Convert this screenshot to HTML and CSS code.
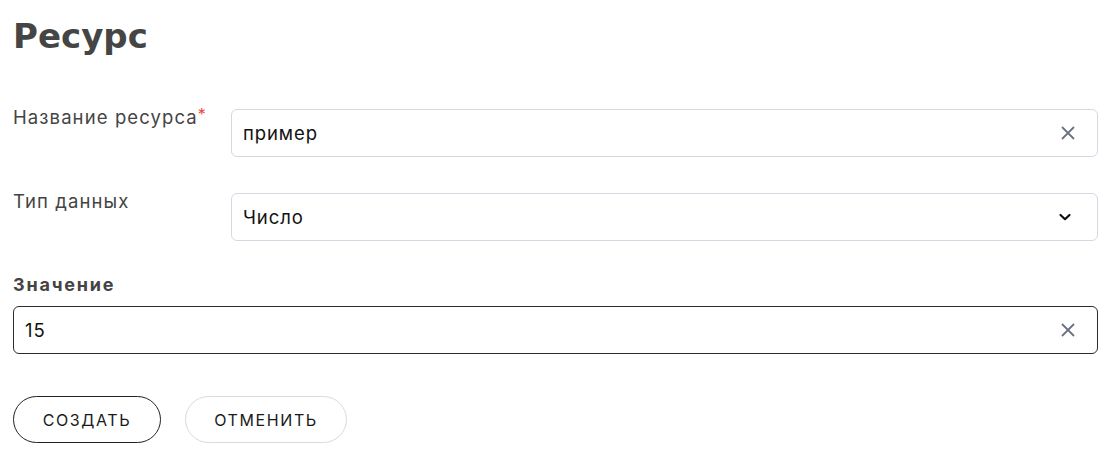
FILE: index.html
```html
<!DOCTYPE html>
<html lang="ru">
<head>
<meta charset="utf-8">
<link rel="stylesheet" href="styles.css">
</head>
<body>
<div class="page">
  <h1 class="title">Ресурс</h1>
  <div class="row row-first">
    <label class="row-label">Название ресурса<span class="req">*</span></label>
    <div class="field">
      <span class="field-text">пример</span>
      <svg class="icon-x" width="16" height="16" viewBox="0 0 16 16"><path d="M2 2L14 14M14 2L2 14" stroke="#6b7280" stroke-width="1.8" fill="none"/></svg>
    </div>
  </div>
  <div class="row">
    <label class="row-label">Тип данных</label>
    <div class="field">
      <span class="field-text">Число</span>
      <svg class="icon-chev" width="14" height="10" viewBox="0 0 14 10"><path d="M2.5 3L7 7.2L11.5 3" stroke="#111" stroke-width="2.2" fill="none" stroke-linecap="round" stroke-linejoin="round"/></svg>
    </div>
  </div>
  <div class="block">
    <div class="block-label">Значение</div>
    <div class="field field-dark">
      <span class="field-text">15</span>
      <svg class="icon-x" width="16" height="16" viewBox="0 0 16 16"><path d="M2 2L14 14M14 2L2 14" stroke="#6b7280" stroke-width="1.8" fill="none"/></svg>
    </div>
  </div>
  <div class="actions">
    <button class="btn btn-primary">СОЗДАТЬ</button>
    <button class="btn btn-secondary">ОТМЕНИТЬ</button>
  </div>
</div>
</body>
</html>
```
FILE: styles.css
```css
* { box-sizing: border-box; }
body {
  margin: 0;
  background: #fff;
  font-family: "Inter", "Noto Sans", sans-serif;
  color: #222;
}
.page {
  padding: 14px 8px 0 13px;
}
.title {
  margin: 0;
  font-family: "DejaVu Sans", "Noto Sans", sans-serif;
  font-weight: 700;
  font-size: 34px;
  line-height: 44px;
  color: #454545;
  letter-spacing: 0;
}
.row {
  display: flex;
  align-items: flex-start;
  margin-top: 36px;
}
.row-first {
  margin-top: 51px;
}
.row-label {
  width: 218px;
  flex: none;
  font-size: 18.5px;
  line-height: 16px;
  color: #444;
  letter-spacing: 1.1px;
}
.req {
  color: #ef4444;
  font-size: 16px;
  position: relative;
  top: -4px;
  letter-spacing: 0;
}
.field {
  flex: 1;
  height: 48px;
  border: 1px solid #d4d8e2;
  border-radius: 6px;
  display: flex;
  align-items: center;
  justify-content: space-between;
  padding: 0 21px 0 11px;
  background: #fff;
}
.field-text {
  font-size: 18.5px;
  color: #111;
  letter-spacing: 0.9px;
}
.icon-chev { margin-right: 4px; }
.block {
  margin-top: 34px;
}
.block-label {
  font-size: 18px;
  font-weight: 700;
  color: #444;
  line-height: 20px;
  margin-bottom: 11px;
  letter-spacing: 1.8px;
}
.field-dark {
  border-color: #2b2b2b;
}
.actions {
  display: flex;
  gap: 24px;
  margin-top: 42px;
}
.btn {
  height: 47px;
  border-radius: 24px;
  background: #fff;
  font-family: "Inter", "Noto Sans", sans-serif;
  font-size: 16px;
  letter-spacing: 1.6px;
  color: #1a1a1a;
  padding: 0;
  cursor: pointer;
}
.btn-primary {
  width: 148px;
  border: 1px solid #222;
}
.btn-secondary {
  width: 162px;
  border: 1px solid #d6dae4;
}
```
